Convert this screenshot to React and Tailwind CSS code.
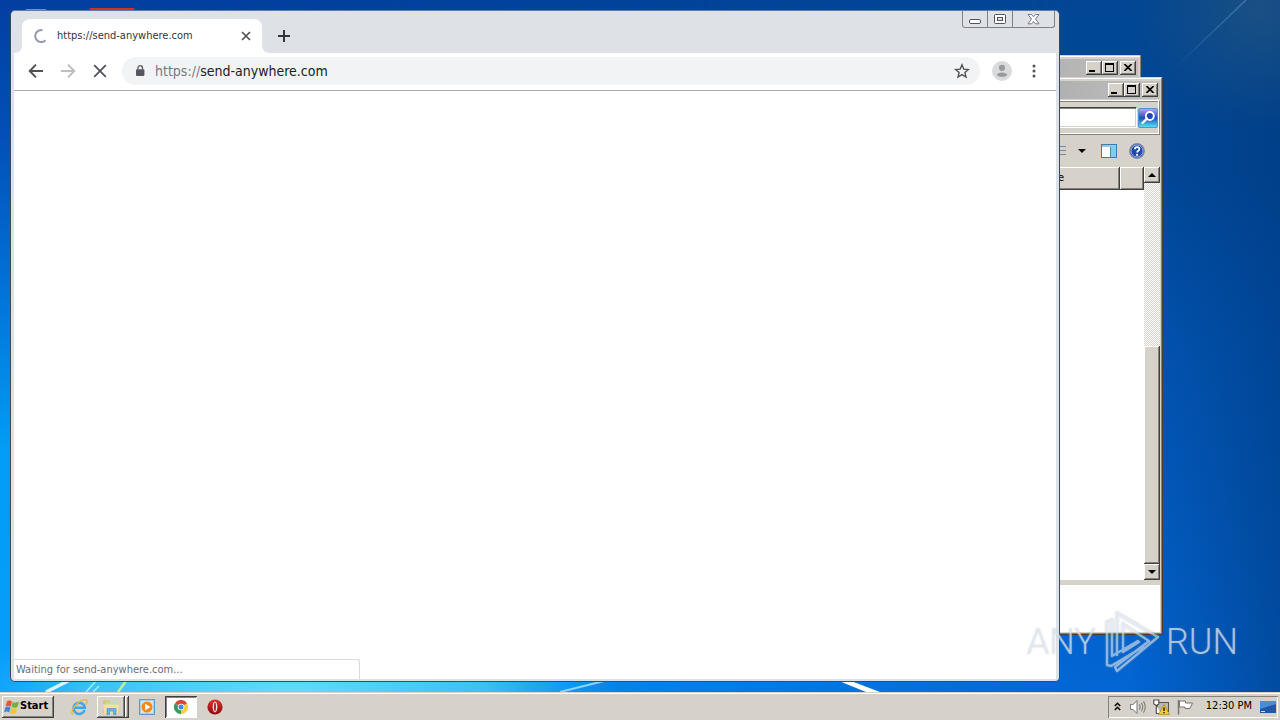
import React from "react";

const raised =
  "bg-[#d6d1c9] shadow-[inset_-1px_-1px_0_#404040,inset_1px_1px_0_#ffffff,inset_-2px_-2px_0_#85817b]";

function Wallpaper() {
  return (
    <svg className="absolute inset-0 h-full w-full" viewBox="0 0 1280 692" preserveAspectRatio="none" aria-hidden="true">
      <defs>
        <linearGradient id="west" x1="0" y1="0" x2="0" y2="1">
          <stop offset="0" stopColor="#033fa0" />
          <stop offset="0.2" stopColor="#0350b8" />
          <stop offset="0.45" stopColor="#0278dc" />
          <stop offset="0.65" stopColor="#029df5" />
          <stop offset="1" stopColor="#069dfa" />
        </linearGradient>
        <linearGradient id="east" x1="0" y1="0" x2="0" y2="1">
          <stop offset="0" stopColor="#014794" />
          <stop offset="0.25" stopColor="#014898" />
          <stop offset="0.5" stopColor="#0155b4" />
          <stop offset="0.8" stopColor="#025fc6" />
          <stop offset="1" stopColor="#0266d4" />
        </linearGradient>
        <linearGradient id="fade">
          <stop offset="0" stopColor="#000" />
          <stop offset="0.25" stopColor="#222" />
          <stop offset="0.85" stopColor="#fff" />
        </linearGradient>
        <linearGradient id="shade">
          <stop offset="0" stopColor="#003a80" stopOpacity="0" />
          <stop offset="1" stopColor="#003a80" stopOpacity="0.6" />
        </linearGradient>
        <radialGradient id="glow">
          <stop offset="0" stopColor="#66dcfa" stopOpacity="1" />
          <stop offset="0.6" stopColor="#4ccbfa" stopOpacity="0.8" />
          <stop offset="1" stopColor="#2cb8ff" stopOpacity="0" />
        </radialGradient>
        <radialGradient id="haze">
          <stop offset="0" stopColor="#2a5a80" stopOpacity="0.6" />
          <stop offset="1" stopColor="#2a5a80" stopOpacity="0" />
        </radialGradient>
        <linearGradient id="ray" x1="1175" y1="68" x2="1246" y2="0" gradientUnits="userSpaceOnUse">
          <stop offset="0" stopColor="#5f8fc4" stopOpacity="0" />
          <stop offset="1" stopColor="#5f8fc4" stopOpacity="0.6" />
        </linearGradient>
        <mask id="eastMask">
          <rect width="1280" height="692" fill="url(#fade)" />
        </mask>
      </defs>
      <rect width="1280" height="692" fill="url(#west)" />
      <rect width="1280" height="692" fill="url(#east)" mask="url(#eastMask)" />
      <rect x="1130" width="150" height="692" fill="url(#shade)" />
      <ellipse cx="1260" cy="10" rx="130" ry="120" fill="url(#haze)" />
      <ellipse cx="290" cy="694" rx="330" ry="90" fill="url(#glow)" />
      <path d="M1175 68L1246 0" stroke="url(#ray)" strokeWidth="1.5" />
      <path d="M46 692L68 681" stroke="#d8f6ff" strokeWidth="3.5" />
      <path d="M86 692L96 681M93 692L99 686" stroke="#a4ecff" strokeWidth="1.5" />
      <path d="M118 692L126 681" stroke="#b4f59a" strokeWidth="2.5" />
      <path d="M560 692L604 681" stroke="#8cd4ff" strokeWidth="2" />
      <path d="M839 681L851 681L880 692L866 692Z" fill="#fff" />
    </svg>
  );
}

function ClassicControls() {
  return (
    <div className="flex">
      <button type="button" aria-label="Minimize" className={"flex h-3.5 w-4 items-end justify-center pb-[3px] " + raised}>
        <span className="mr-1 h-0.5 w-1.5 bg-black" />
      </button>
      <button type="button" aria-label="Maximize" className={"flex h-3.5 w-4 items-start justify-center pt-0.5 pr-px " + raised}>
        <span className="h-[9px] w-[9px] border border-t-2 border-black" />
      </button>
      <button type="button" aria-label="Close" className={"ml-0.5 flex h-3.5 w-4 items-center justify-center pr-px pb-px " + raised}>
        <svg width="8" height="7" viewBox="0 0 8 7" aria-hidden="true">
          <path d="M0.5 0L7.5 7M7.5 0L0.5 7" stroke="#000" strokeWidth="1.6" />
        </svg>
      </button>
    </div>
  );
}

function TitleBar() {
  return (
    <div className="flex h-[18px] shrink-0 items-center justify-end bg-linear-to-r from-[#808080] to-[#c0c0c0] pr-0.5">
      <ClassicControls />
    </div>
  );
}

function Explorer() {
  return (
    <section
      aria-label="Explorer"
      className="absolute top-[77px] right-[117px] bottom-[57px] flex w-1/3 flex-col bg-[#d6d1c9] p-[3px] pt-1 shadow-[inset_-1px_-1px_0_#404040,inset_1px_1px_0_#d6d1c9,inset_-2px_-2px_0_#85817b,inset_2px_2px_0_#fff]"
    >
      <TitleBar />
      <div className="mt-px flex h-[35px] shrink-0 items-center gap-px border border-[#85817b] border-t-white pr-px shadow-[inset_-1px_-1px_0_#fff,inset_0_1px_0_#85817b]">
        <input
          aria-label="Search"
          className="h-[21px] min-w-0 flex-1 border border-white border-t-[#404040] bg-white shadow-[inset_0_1px_0_#85817b,inset_-1px_-1px_0_#d6d1c9] outline-none"
        />
        <button type="button" aria-label="Go" className="h-5 w-5 overflow-hidden">
          <svg width="20" height="20" viewBox="0 0 20 20" aria-hidden="true">
            <defs>
              <linearGradient id="go" x1="0" y1="0" x2="0" y2="1">
                <stop offset="0" stopColor="#b8a8f0" />
                <stop offset="0.35" stopColor="#5a60d4" />
                <stop offset="0.5" stopColor="#1c50c0" />
                <stop offset="1" stopColor="#58e8f4" />
              </linearGradient>
            </defs>
            <rect x="0.5" y="0.5" width="19" height="19" rx="1.5" fill="url(#go)" stroke="#5a90d0" />
            <circle cx="11.8" cy="8" r="4" fill="#2545bd" stroke="#fff" strokeWidth="1.8" />
            <path d="M9 10.5L4.5 15" stroke="#fff" strokeWidth="2.4" strokeLinecap="round" />
          </svg>
        </button>
      </div>
      <div className="flex h-8 shrink-0 items-center justify-end pr-[15px]">
        <button type="button" aria-label="Views" className="flex items-center gap-3">
          <svg width="14" height="12" viewBox="0 0 14 12" aria-hidden="true">
            <path d="M0 1.5H14M0 5.5H14M0 9.5H14" stroke="#77889a" />
          </svg>
          <svg width="8" height="4" viewBox="0 0 8 4" aria-hidden="true">
            <path d="M0 0H8L4 4Z" fill="#000" />
          </svg>
        </button>
        <button type="button" aria-label="Preview pane" className="ml-[15px]">
          <svg width="16" height="14" viewBox="0 0 16 14" aria-hidden="true">
            <rect x="0.5" y="0.5" width="15" height="13" fill="#fff" stroke="#3a7bb0" />
            <path d="M1 2H15" stroke="#9ac8e8" strokeWidth="2" />
            <rect x="10" y="3" width="5" height="10" fill="#7fd0e0" />
            <path d="M9.5 3V13" stroke="#4a88b8" />
          </svg>
        </button>
        <button type="button" aria-label="Help" className="ml-3">
          <svg width="16" height="16" viewBox="0 0 16 16" aria-hidden="true">
            <circle cx="8" cy="8" r="7.3" fill="#2148ac" stroke="#7c8aa8" strokeWidth="1.2" />
            <circle cx="8" cy="8" r="6" fill="none" stroke="#b8ccf4" strokeWidth="0.8" />
            <path d="M5.8 6.3C5.8 3.4 10.4 3.4 10.4 6C10.4 7.8 8.1 7.6 8.1 9.6" fill="none" stroke="#fff" strokeWidth="1.8" />
            <circle cx="8.1" cy="11.8" r="1.1" fill="#fff" />
          </svg>
        </button>
      </div>
      <div className="flex min-h-0 flex-1">
        <div className="flex min-w-0 flex-1 flex-col bg-white">
          <div className="flex h-[23px] shrink-0 text-[11px]">
            <div className={"flex flex-1 items-center justify-end pr-14 " + raised}>Date type</div>
            <div className={"w-6 " + raised} />
          </div>
        </div>
        <div className="flex w-4 flex-col bg-[repeating-conic-gradient(#fff_0_25%,#d6d1c9_0_50%)] bg-size-[2px_2px]">
          <button type="button" aria-label="Scroll up" className={"flex h-4 items-center justify-center " + raised}>
            <svg width="8" height="4" viewBox="0 0 8 4" aria-hidden="true">
              <path d="M0 4H8L4 0Z" fill="#000" />
            </svg>
          </button>
          <div className="flex-[163]" />
          <div className={"flex-[218] " + raised} />
          <button type="button" aria-label="Scroll down" className={"flex h-4 items-center justify-center " + raised}>
            <svg width="8" height="4" viewBox="0 0 8 4" aria-hidden="true">
              <path d="M0 0H8L4 4Z" fill="#000" />
            </svg>
          </button>
        </div>
      </div>
      <div className="mt-[5px] h-[47px] shrink-0 bg-white" />
    </section>
  );
}

function ToolButton({ label, children }) {
  return (
    <button type="button" aria-label={label} className="flex h-8 w-8 items-center justify-center">
      {children}
    </button>
  );
}

function Browser() {
  return (
    <section
      aria-label="Browser"
      className="absolute top-2.5 right-[220px] bottom-2.5 left-2.5 flex flex-col rounded-[5px] border border-[#3d4a5c] border-t-[#5f7cab] bg-[#dee1e6] px-[3px] pb-0.5"
    >
      <header className="flex h-[42px] shrink-0 items-end pl-2">
        <div className="relative flex h-[34px] w-60 items-center rounded-t-lg bg-white pr-[11px] pl-3">
          <svg className="absolute bottom-0 -left-2" width="8" height="8" viewBox="0 0 8 8" aria-hidden="true">
            <path d="M8 0V8H0C5 8 8 5 8 0Z" fill="#fff" />
          </svg>
          <svg className="absolute -right-2 bottom-0" width="8" height="8" viewBox="0 0 8 8" aria-hidden="true">
            <path d="M0 0V8H8C3 8 0 5 0 0Z" fill="#fff" />
          </svg>
          <svg width="14" height="14" viewBox="0 0 14 14" aria-hidden="true">
            <path d="M8.5 1.2A6 6 0 1 0 11.5 11.3" fill="none" stroke="#949bb0" strokeWidth="2" />
          </svg>
          <span className="ml-[9px] flex-1 text-[11px] whitespace-nowrap text-[#333539]">https://send-anywhere.com</span>
          <button type="button" aria-label="Close tab">
            <svg width="10" height="10" viewBox="0 0 10 10" aria-hidden="true">
              <path d="M1 1L9 9M9 1L1 9" stroke="#505357" strokeWidth="1.7" />
            </svg>
          </button>
        </div>
        <button type="button" aria-label="New tab" className="mb-[11px] ml-4">
          <svg width="12" height="12" viewBox="0 0 12 12" aria-hidden="true">
            <path d="M6 0V12M0 6H12" stroke="#33363b" strokeWidth="2" />
          </svg>
        </button>
        <div className="mr-px ml-auto flex h-[17px] self-start rounded-b-[3px] border border-t-0 border-[#7d828c]">
          <button type="button" aria-label="Minimize" className="flex w-[25px] items-end justify-center border-r border-[#7d828c] pb-[3px]">
            <span className="h-[5px] w-3 rounded-xs border border-[#50545c] bg-white" />
          </button>
          <button type="button" aria-label="Maximize" className="flex w-[25px] items-center justify-center border-r border-[#7d828c]">
            <svg width="12" height="10" viewBox="0 0 12 10" aria-hidden="true">
              <rect x="0.5" y="0.5" width="11" height="9" rx="1" fill="#fff" stroke="#50545c" />
              <rect x="3.5" y="3.5" width="5" height="3" fill="#dee1e6" stroke="#50545c" />
            </svg>
          </button>
          <button type="button" aria-label="Close" className="flex w-[41px] items-center justify-center">
            <svg width="13" height="11" viewBox="0 0 13 11" aria-hidden="true">
              <path d="M1 0.5H4.5L6.5 2.8L8.5 0.5H12L8.5 5L12 9.8H8.5L6.5 7.5L4.5 9.8H1L4.5 5Z" fill="#fff" stroke="#686c78" strokeWidth="0.9" />
            </svg>
          </button>
        </div>
      </header>
      <div className="flex h-[38px] shrink-0 items-center border-b border-[#a8abb0] bg-white pr-1.5 pb-px pl-1.5">
        <ToolButton label="Back">
          <svg width="16" height="16" viewBox="0 0 16 16" aria-hidden="true">
            <path d="M15 8H2M8 1.7L1.7 8L8 14.3" fill="none" stroke="#4d5054" strokeWidth="1.9" />
          </svg>
        </ToolButton>
        <ToolButton label="Forward">
          <svg width="16" height="16" viewBox="0 0 16 16" aria-hidden="true">
            <path d="M1 8H14M8 1.7L14.3 8L8 14.3" fill="none" stroke="#bcbec1" strokeWidth="1.9" />
          </svg>
        </ToolButton>
        <ToolButton label="Stop">
          <svg width="14" height="14" viewBox="0 0 14 14" aria-hidden="true">
            <path d="M1.2 1.2L12.8 12.8M12.8 1.2L1.2 12.8" stroke="#4d5054" strokeWidth="1.7" />
          </svg>
        </ToolButton>
        <div className="ml-1.5 flex h-7 min-w-0 flex-1 items-center rounded-full bg-[#f1f3f4] pr-2.5 pl-3 text-sm">
          <svg width="12" height="14" viewBox="0 0 12 14" aria-hidden="true">
            <rect x="2" y="5.2" width="8.4" height="6.8" rx="1" fill="#54575c" />
            <path d="M3.9 5.5V4A2.3 2.3 0 0 1 8.5 4V5.5" fill="none" stroke="#54575c" strokeWidth="1.3" />
          </svg>
          <label htmlFor="address" className="ml-[9px] text-[#777b80]">https://</label>
          <input id="address" defaultValue="send-anywhere.com" className="min-w-0 flex-1 bg-transparent text-[#202124] outline-none" />
          <button type="button" aria-label="Bookmark">
            <svg width="16" height="16" viewBox="0 0 16 16" aria-hidden="true">
              <path d="M8 1.8L9.8 6.1L14.4 6.5L10.9 9.5L12 14L8 11.6L4 14L5.1 9.5L1.6 6.5L6.2 6.1Z" fill="none" stroke="#505357" strokeWidth="1.4" />
            </svg>
          </button>
        </div>
        <button type="button" aria-label="Profile" className="ml-3">
          <svg width="20" height="20" viewBox="0 0 20 20" aria-hidden="true">
            <circle cx="10" cy="10" r="10" fill="#dadbdc" />
            <circle cx="10" cy="6.8" r="3.1" fill="#999b9e" />
            <path d="M4.8 14C4.8 10.6 15.2 10.6 15.2 14C13.8 16.6 6.2 16.6 4.8 14Z" fill="#999b9e" />
          </svg>
        </button>
        <div className="ml-1.5">
          <ToolButton label="Menu">
            <svg width="4" height="14" viewBox="0 0 4 14" aria-hidden="true">
              <circle cx="2" cy="2" r="1.5" fill="#505357" />
              <circle cx="2" cy="7" r="1.5" fill="#505357" />
              <circle cx="2" cy="12" r="1.5" fill="#505357" />
            </svg>
          </ToolButton>
        </div>
      </div>
      <main className="flex flex-1 flex-col items-start justify-end bg-white">
        <p className="h-5 w-[346px] rounded-tr-[3px] border-t border-r border-[#d9dadc] pl-0.5 text-[11px] leading-5 text-[#6c6e72]">
          Waiting for send-anywhere.com...
        </p>
      </main>
    </section>
  );
}

function Watermark() {
  return (
    <div className="pointer-events-none absolute right-[42px] bottom-[18px] flex items-center gap-1 text-[36px] leading-none font-light text-[#e4ebf4]/70 [font-family:Roboto,'DejaVu_Sans_Condensed',sans-serif] [text-shadow:0_0_2px_#8899aa66]">
      <span>ANY</span>
      <svg width="62" height="64" viewBox="0 0 62 64" fill="none" aria-hidden="true">
        <g strokeLinejoin="round" strokeLinecap="round">
          <path d="M12 10L7 12V55L11 56L43 37M12 10V46L38 31M17 45V3L58 27L17 61L15 57L49 31L23 14V42L39 32" stroke="#788896" strokeOpacity="0.15" strokeWidth="5" />
          <path d="M12 10L7 12V55L11 56L43 37M12 10V46L38 31M17 45V3L58 27L17 61L15 57L49 31L23 14V42L39 32" stroke="#dfe8f4" strokeOpacity="0.6" strokeWidth="2.5" />
        </g>
      </svg>
      <span>RUN</span>
    </div>
  );
}

function FlagLogo() {
  return (
    <svg width="16" height="16" viewBox="0 0 16 16" aria-hidden="true">
      <path d="M3 2.5Q5.5 0.5 8 2.5L6.8 7.5Q4.5 6 1.6 7.4Z" fill="#e8562a" />
      <path d="M8.8 3Q11.5 4.6 15 2.6L13.6 7.8Q10.8 9.5 7.6 7.8Z" fill="#6eb43a" />
      <path d="M1.4 8.3Q4.2 6.8 6.6 8.4L5.2 13.5Q3 11.8 0 13.2Z" fill="#4286dc" />
      <path d="M7.4 8.8Q10.4 10.4 13.4 8.6L12 13.8Q9 15.6 6 14Z" fill="#f6c338" />
    </svg>
  );
}

function Taskbar() {
  return (
    <footer className="relative flex h-7 shrink-0 items-center border-t border-[#d6d1c9] bg-[#d6d1c9] pr-0.5 pl-0.5 text-[11px] text-black shadow-[inset_0_1px_0_#fff]">
      <button type="button" className={"flex h-[22px] w-[52px] items-center pl-0.5 font-bold " + raised}>
        <FlagLogo />
        Start
      </button>
      <button type="button" aria-label="Internet Explorer" className="ml-4">
        <svg width="18" height="18" viewBox="0 0 18 18" aria-hidden="true">
          <path d="M14.6 12A5.6 5.6 0 1 1 14.8 9.8H4.5" fill="none" stroke="#46a6e2" strokeWidth="2.6" />
          <path d="M3 16.5C-1 15 7 1.5 15.8 1.6C18 2 17 5 15.5 6.5" fill="none" stroke="#e2b848" strokeWidth="1.3" />
        </svg>
      </button>
      <button type="button" aria-label="Windows Explorer" className="ml-[9px] flex h-[22px] w-8">
        <span className={"flex h-full w-7 items-center justify-center " + raised}>
          <svg width="18" height="18" viewBox="0 0 18 18" aria-hidden="true">
            <path d="M1 2.5H7L8.5 4.5H15V15H1Z" fill="#e2c158" />
            <path d="M3 4H15V9H3Z" fill="#b7e1b0" />
            <path d="M1 6.5H17L16 15.5H2Z" fill="#f4e394" />
            <path d="M5 16.5V10.5H14V16.5H11.5V13H7.5V16.5Z" fill="#68b4e6" stroke="#3b8bc6" strokeWidth="0.6" />
          </svg>
        </span>
        <span className={"h-full w-1 " + raised} />
      </button>
      <button type="button" aria-label="Media Player" className="ml-2.5">
        <svg width="16" height="16" viewBox="0 0 16 16" aria-hidden="true">
          <rect x="0.5" y="0.5" width="15" height="15" fill="#9fcff0" stroke="#5a9dd0" />
          <rect x="2" y="2" width="12" height="12" fill="#d0e9f9" />
          <circle cx="8" cy="8" r="5.5" fill="#f28a18" />
          <path d="M6.2 4.8V11.2L11.4 8Z" fill="#fff" />
        </svg>
      </button>
      <button
        type="button"
        aria-label="Chrome"
        className="ml-2.5 flex h-[22px] w-8 items-center justify-center bg-white shadow-[inset_1px_1px_0_#404040,inset_-1px_-1px_0_#fff,inset_2px_2px_0_#85817b]"
      >
        <svg width="14" height="14" viewBox="0 0 14 14" aria-hidden="true">
          <path d="M7 7L0.9 3.5A7 7 0 0 1 13.1 3.5Z" fill="#dd4436" />
          <path d="M7 7L13.1 3.5A7 7 0 0 1 7 14Z" fill="#f8cf38" />
          <path d="M7 7L7 14A7 7 0 0 1 0.9 3.5Z" fill="#2f9e56" />
          <circle cx="7" cy="7" r="3.3" fill="#fff" />
          <circle cx="7" cy="7" r="2.5" fill="#4385ee" />
        </svg>
      </button>
      <button type="button" aria-label="Opera" className="ml-2.5">
        <svg width="16" height="16" viewBox="0 0 16 16" aria-hidden="true">
          <defs>
            <linearGradient id="opera" x1="0" y1="0" x2="0" y2="1">
              <stop offset="0" stopColor="#d83434" />
              <stop offset="1" stopColor="#8c0808" />
            </linearGradient>
          </defs>
          <circle cx="8" cy="8" r="7.6" fill="url(#opera)" />
          <ellipse cx="8" cy="8" rx="2.4" ry="5.4" fill="#f6dede" />
          <ellipse cx="8" cy="8" rx="0.9" ry="4.4" fill="#ac1616" />
        </svg>
      </button>
      <div className="ml-auto flex h-[22px] items-center pr-0.5 pl-1.5 shadow-[inset_1px_1px_0_#85817b,inset_-1px_-1px_0_#fff]">
        <button type="button" aria-label="Show hidden icons">
          <svg width="7" height="10" viewBox="0 0 7 10" aria-hidden="true">
            <path d="M0.8 4L3.5 1.3L6.2 4M0.8 8L3.5 5.3L6.2 8" fill="none" stroke="#000" strokeWidth="1.4" />
          </svg>
        </button>
        <svg className="ml-2" width="18" height="16" viewBox="0 0 18 16" aria-hidden="true">
          <path d="M1.5 5.5H4.2L8 1.5V14.5L4.2 10.5H1.5Z" fill="#fff" stroke="#7a7a7a" />
          <path d="M10.3 5.4Q12 8 10.3 10.6M12.4 3.8Q15 8 12.4 12.2M14.5 2.4Q18 8 14.5 13.6" fill="none" stroke="#84807a" strokeWidth="1.1" />
        </svg>
        <svg className="ml-1.5" width="17" height="16" viewBox="0 0 17 16" aria-hidden="true">
          <rect x="4.5" y="3.5" width="11" height="9" fill="#b8b8b4" stroke="#55554f" />
          <path d="M0.8 1H5.8V5L3.3 6.5L0.8 5ZM3.3 6V14.5H8" fill="#fff" stroke="#55554f" strokeWidth="1.2" />
          <path d="M11 5.5L16.4 15.4H5.6Z" fill="#f8d030" stroke="#a88408" strokeWidth="0.7" />
          <path d="M11 8.5V12M11 13V14.3" stroke="#000" strokeWidth="1.3" />
        </svg>
        <svg className="ml-[7px]" width="17" height="16" viewBox="0 0 17 16" aria-hidden="true">
          <path d="M1.5 1V15.5" stroke="#7a7670" strokeWidth="1.5" />
          <path d="M2.5 2H8.5V4H15.5L13 9.5H8V8H2.5Z" fill="#fff" stroke="#7a7670" />
        </svg>
        <time className="ml-3 whitespace-nowrap">12:30 PM</time>
        <button type="button" aria-label="Show desktop" className="ml-2">
          <svg width="16" height="12" viewBox="0 0 16 12" aria-hidden="true">
            <rect width="16" height="12" fill="#2257a8" />
            <path d="M0 0H16V3L0 8Z" fill="#4c8bd6" />
            <path d="M1 10.5H5" stroke="#bfe0ff" />
          </svg>
        </button>
      </div>
    </footer>
  );
}

export default function App() {
  return (
    <div className="flex h-screen flex-col overflow-hidden [font-family:'DejaVu_Sans_Condensed','DejaVu_Sans',sans-serif]">
      <div className="relative min-h-0 flex-1">
        <Wallpaper />
        <div className="absolute top-[9px] left-6 h-1 w-6 rounded-t-full bg-[#6d92cc]" />
        <div className="absolute top-2 left-[90px] h-1 w-11 bg-[#d43020]" />
        <section
          aria-label="Folder"
          className="absolute top-[55px] right-[139px] bottom-20 w-1/3 bg-[#d6d1c9] p-[3px] pt-1 shadow-[inset_-1px_-1px_0_#85817b,inset_1px_1px_0_#d6d1c9,inset_2px_2px_0_#fff]"
        >
          <TitleBar />
        </section>
        <Explorer />
        <Browser />
        <Watermark />
      </div>
      <Taskbar />
    </div>
  );
}
